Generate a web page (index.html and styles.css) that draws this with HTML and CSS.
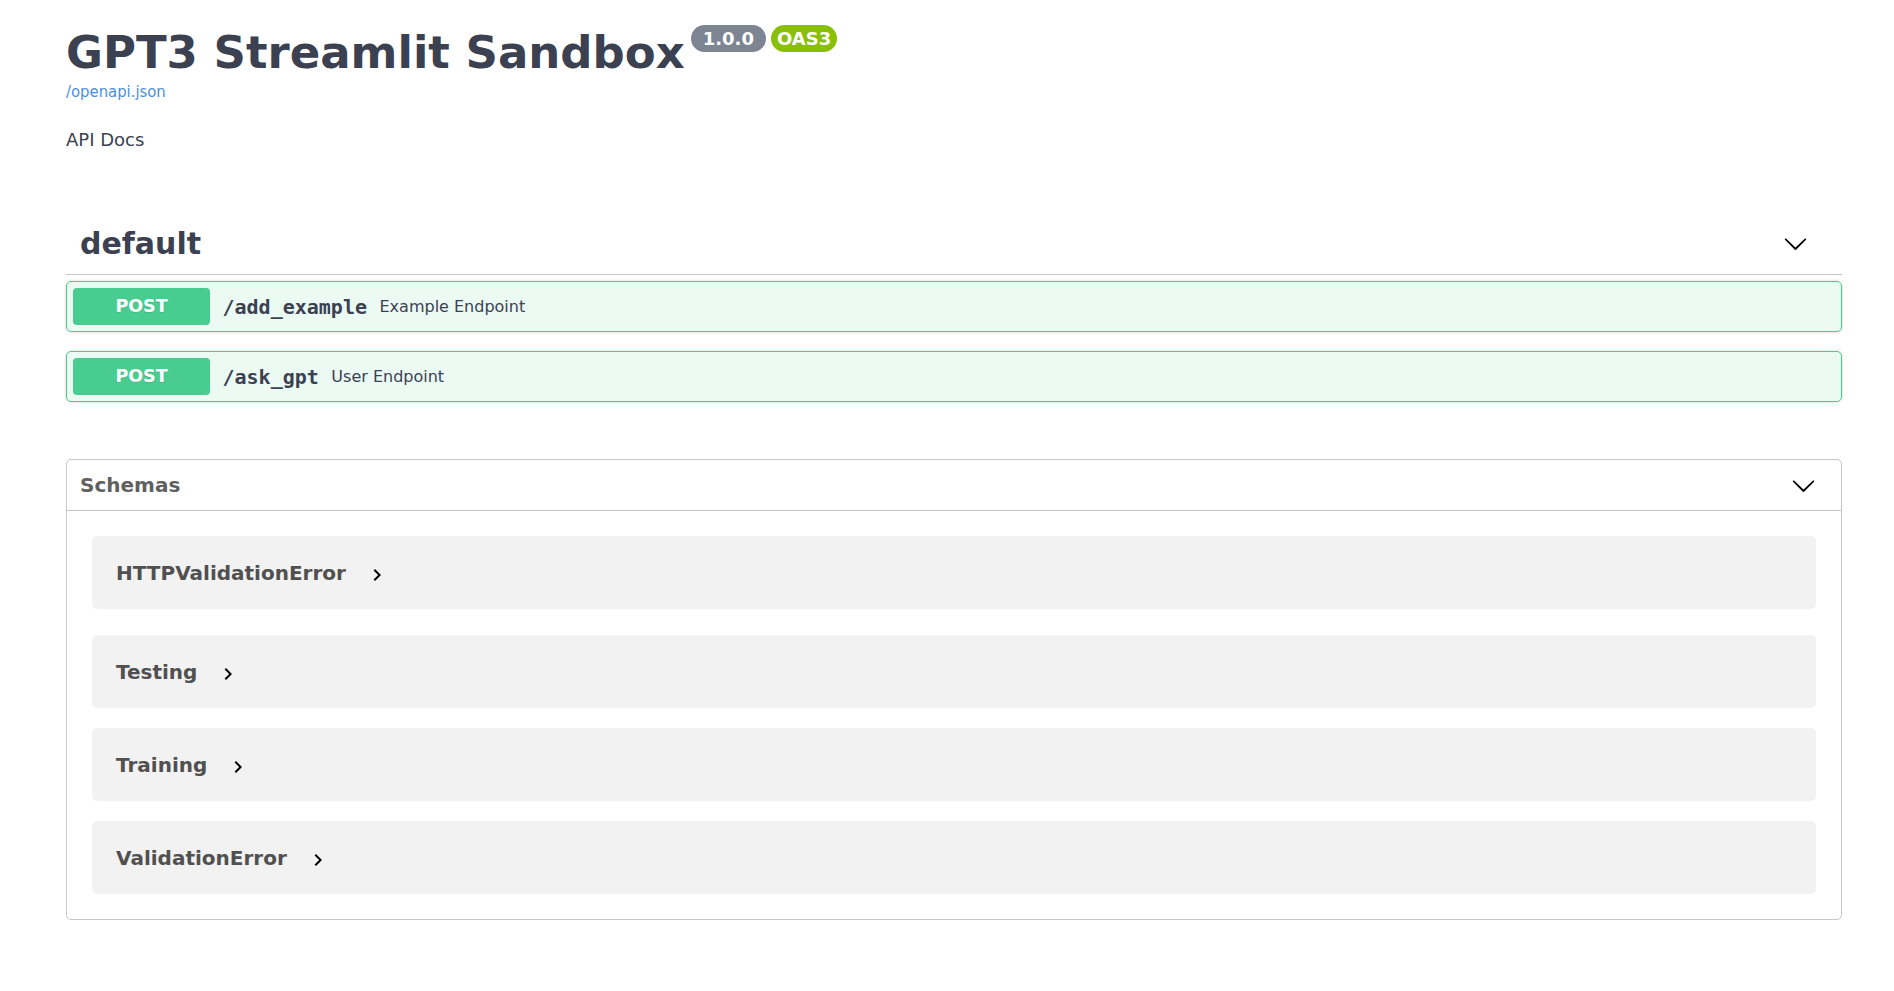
FILE: index.html
```html
<!DOCTYPE html>
<html lang="en">
<head>
<meta charset="utf-8">
<title>GPT3 Streamlit Sandbox - Swagger UI</title>
<link rel="stylesheet" href="styles.css">
</head>
<body>
<div class="wrapper">
  <section class="info">
    <div class="title-row">
      <h2 class="title">GPT3 Streamlit Sandbox</h2>
      <span class="badge badge-version">1.0.0</span>
      <span class="badge badge-oas">OAS3</span>
    </div>
    <a class="url" href="#">/openapi.json</a>
    <p class="desc">API Docs</p>
  </section>

  <section class="tag-section">
    <h3 class="tag">
      <span class="tag-name">default</span>
      <svg class="arrow tag-arrow" viewBox="0 0 20 20" width="25" height="25"><path d="M17.418 6.109c.272-.268.709-.268.979 0s.271.701 0 .969l-7.908 7.830c-.27.268-.707.268-.979 0l-7.908-7.830c-.27-.268-.27-.701 0-.969.271-.268.709-.268.98 0L10 13.25l7.418-7.141z"/></svg>
    </h3>
    <div class="opblock">
      <span class="method">POST</span>
      <span class="path">/add_example</span>
      <span class="summary">Example Endpoint</span>
    </div>
    <div class="opblock">
      <span class="method">POST</span>
      <span class="path">/ask_gpt</span>
      <span class="summary">User Endpoint</span>
    </div>
  </section>

  <section class="models">
    <h4 class="models-head">
      <span>Schemas</span>
      <svg class="arrow" viewBox="0 0 20 20" width="25" height="25"><path d="M17.418 6.109c.272-.268.709-.268.979 0s.271.701 0 .969l-7.908 7.830c-.27.268-.707.268-.979 0l-7.908-7.830c-.27-.268-.27-.701 0-.969.271-.268.709-.268.98 0L10 13.25l7.418-7.141z"/></svg>
    </h4>
    <div class="model-list">
      <div class="model">
        <span class="model-title">HTTPValidationError</span>
        <svg class="toggle" viewBox="0 0 24 24" width="24" height="24"><path d="M10 6L8.59 7.41 13.17 12l-4.58 4.59L10 18l6-6z"/></svg>
      </div>
      <div class="model">
        <span class="model-title">Testing</span>
        <svg class="toggle" viewBox="0 0 24 24" width="24" height="24"><path d="M10 6L8.59 7.41 13.17 12l-4.58 4.59L10 18l6-6z"/></svg>
      </div>
      <div class="model">
        <span class="model-title">Training</span>
        <svg class="toggle" viewBox="0 0 24 24" width="24" height="24"><path d="M10 6L8.59 7.41 13.17 12l-4.58 4.59L10 18l6-6z"/></svg>
      </div>
      <div class="model">
        <span class="model-title">ValidationError</span>
        <svg class="toggle" viewBox="0 0 24 24" width="24" height="24"><path d="M10 6L8.59 7.41 13.17 12l-4.58 4.59L10 18l6-6z"/></svg>
      </div>
    </div>
  </section>
</div>
</body>
</html>
```

FILE: styles.css
```css
html, body {
  margin: 0;
  padding: 0;
  background: #ffffff;
}

body {
  font-family: "DejaVu Sans", "Noto Sans", sans-serif;
  color: #3b4151;
}

.wrapper {
  padding: 0 52px 60px 66px;
}

/* ---------- info ---------- */
.info {
  padding-top: 25px;
}

.title-row {
  display: flex;
  align-items: flex-start;
}

.title {
  margin: 2px 0 0 0;
  font-size: 45px;
  line-height: 52px;
  font-weight: 700;
  color: #3b4151;
}

.badge {
  height: 27px;
  line-height: 27px;
  border-radius: 70px;
  color: #ffffff;
  font-size: 18px;
  font-weight: 700;
  background: #7d8492;
}

.badge-version {
  margin-left: 6px;
  padding: 0 12px;
}

.badge-oas {
  margin-left: 5px;
  padding: 0 6px;
  background: #89bf04;
}

.url {
  display: block;
  margin-top: 4px;
  font-family: "DejaVu Sans Condensed", "DejaVu Sans", sans-serif;
  font-stretch: condensed;
  font-size: 16.5px;
  line-height: 18px;
  font-weight: 400;
  color: #4990e2;
  text-decoration: none;
}

.desc {
  margin: 28px 0 0 0;
  font-size: 18px;
  line-height: 21px;
  color: #3b4151;
}

/* ---------- tag section ---------- */
.tag-section {
  margin-top: 64px;
}

.tag {
  display: flex;
  align-items: center;
  justify-content: space-between;
  margin: 0 0 6px 0;
  padding: 12px 25px 13px 14px;
  font-size: 30px;
  line-height: 35px;
  font-weight: 700;
  color: #3b4151;
  border-bottom: 1px solid rgba(59, 65, 81, 0.3);
}

.arrow {
  display: block;
  fill: #000000;
}

.tag-arrow {
  margin-right: 9px;
}

.opblock {
  display: flex;
  align-items: center;
  margin-bottom: 19px;
  padding: 6px;
  background: rgba(73, 204, 144, 0.1);
  border: 1px solid #49cc90;
  border-radius: 5px;
  box-shadow: 0 0 3px rgba(0, 0, 0, 0.19);
}

.method {
  width: 137px;
  height: 37px;
  line-height: 37px;
  text-align: center;
  font-size: 17.5px;
  font-weight: 700;
  color: #ffffff;
  background: #49cc90;
  border-radius: 4px;
  text-shadow: 0 1px 0 rgba(0, 0, 0, 0.1);
}

.path {
  padding: 0 12.5px;
  font-family: "DejaVu Sans Mono", "Liberation Mono", monospace;
  font-size: 20px;
  font-weight: 700;
  color: #3b4151;
}

.summary {
  font-size: 16px;
  color: #3b4151;
}

/* ---------- models ---------- */
.models {
  margin-top: 57px;
  border: 1px solid rgba(59, 65, 81, 0.3);
  border-radius: 5px;
}

.models-head {
  display: flex;
  align-items: center;
  justify-content: space-between;
  margin: 0;
  padding: 12.5px 25px 12.5px 13px;
  font-size: 20px;
  line-height: 25px;
  font-weight: 700;
  color: #606060;
  border-bottom: 1px solid rgba(59, 65, 81, 0.3);
}

.model-list {
  display: flex;
  flex-direction: column;
  gap: 20px;
  padding: 25px 25px 25px 25px;
}

.model {
  display: flex;
  align-items: center;
  height: 73px;
  padding-left: 24px;
  background: rgba(0, 0, 0, 0.05);
  border-radius: 5px;
}

.model:first-child {
  margin-bottom: 6px;
}

.model-title {
  font-size: 20px;
  font-weight: 700;
  color: #505050;
}

.toggle {
  display: block;
  margin-left: 19px;
  margin-top: 4px;
  fill: #000000;
}
```
